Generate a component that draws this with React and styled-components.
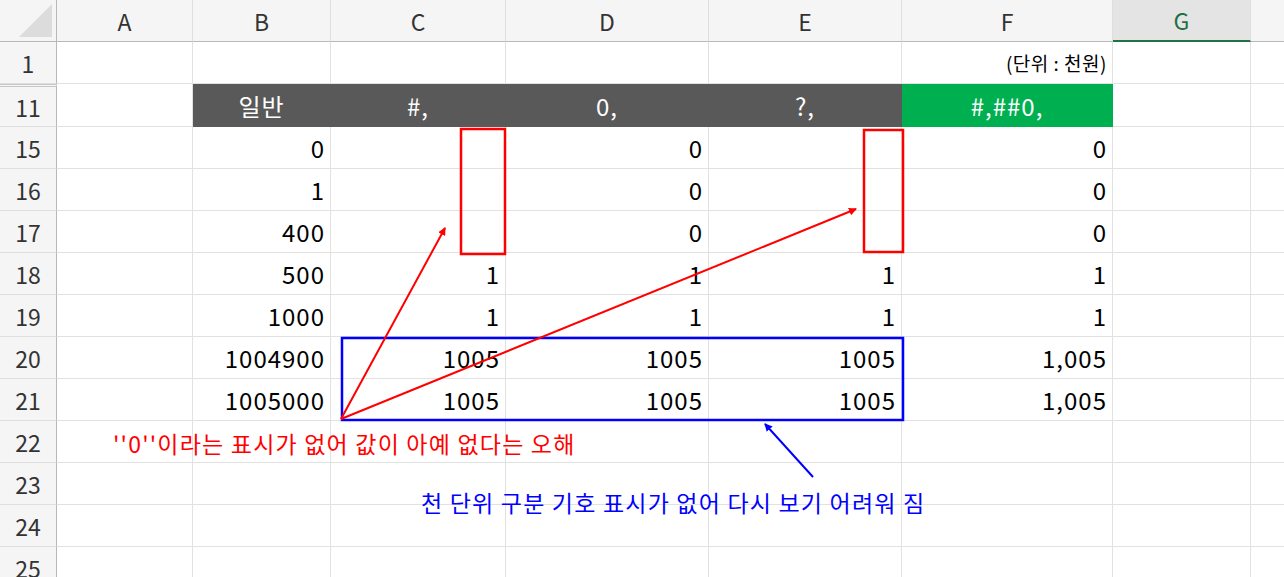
import React from 'react';
import styled, { createGlobalStyle } from 'styled-components';

const Global = createGlobalStyle`
  body { margin: 0; background: #fff; font-family: "Noto Sans CJK KR", "Noto Sans", sans-serif; overflow: hidden; }
`;

const cols = [
  { name: 'A', w: 136 }, { name: 'B', w: 138 }, { name: 'C', w: 175 }, { name: 'D', w: 203 },
  { name: 'E', w: 193 }, { name: 'F', w: 211 }, { name: 'G', w: 138 }, { name: '', w: 40 },
];
const template = `57px ${cols.map(c => c.w + 'px').join(' ')}`;

const rows = [
  { n: 1, cells: { F: '(단위 : 천원)' }, small: true },
  { n: 11, head: true },
  { n: 15, cells: { B: '0', D: '0', F: '0' } },
  { n: 16, cells: { B: '1', D: '0', F: '0' } },
  { n: 17, cells: { B: '400', D: '0', F: '0' } },
  { n: 18, cells: { B: '500', C: '1', D: '1', E: '1', F: '1' } },
  { n: 19, cells: { B: '1000', C: '1', D: '1', E: '1', F: '1' } },
  { n: 20, cells: { B: '1004900', C: '1005', D: '1005', E: '1005', F: '1,005' } },
  { n: 21, cells: { B: '1005000', C: '1005', D: '1005', E: '1005', F: '1,005' } },
  { n: 22 }, { n: 23 }, { n: 24 }, { n: 25 },
];

const headCells = { B: '일반', C: '#,', D: '0,', E: '?,', F: '#,##0,' };

const Sheet = styled.div`
  position: relative;
  width: 1284px;
  height: 577px;
  overflow: hidden;
`;

const Row = styled.div`
  display: grid;
  grid-template-columns: ${template};
  height: ${p => p.$h}px;
`;

const Corner = styled.div`
  background: #f5f5f5;
  border-right: 1px solid #b8b8b8;
  border-bottom: 1px solid #b8b8b8;
  position: relative;
  &::after {
    content: '';
    position: absolute;
    right: 4px; bottom: 4px;
    border-left: 33px solid transparent;
    border-bottom: 33px solid #dcdcdc;
  }
`;

const ColHead = styled.div`
  background: ${p => (p.$sel ? '#e4e4e4' : '#f5f5f5')};
  color: ${p => (p.$sel ? '#1e7145' : '#333')};
  border-right: 1px solid #dedede;
  border-bottom: ${p => (p.$sel ? '2px solid #217346' : '1px solid #b8b8b8')};
  display: flex; align-items: center; justify-content: center;
  font-size: 23px;
`;

const RowHead = styled.div`
  background: #f5f5f5;
  color: #333;
  border-right: 1px solid #b8b8b8;
  border-bottom: 1px solid #dedede;
  border-top: ${p => (p.$double ? '3px double #c8c8c8' : 'none')};
  display: flex; align-items: center; justify-content: center;
  font-size: 23px;
`;

const Cell = styled.div`
  border-right: 1px solid #e1e1e1;
  border-bottom: 1px solid #e1e1e1;
  display: flex; align-items: center;
  justify-content: ${p => p.$align};
  padding: 0 ${p => (p.$center ? 0 : 5)}px;
  font-size: ${p => (p.$small ? 19 : 24)}px;
  letter-spacing: ${p => (p.$small ? 0.5 : 1)}px;
  color: ${p => (p.$fill ? '#fff' : '#000')};
  background: ${p => p.$fill || 'transparent'};
  ${p => p.$fill && 'border-right-color: transparent; border-bottom-color: transparent;'}
  white-space: nowrap;
`;

const Overlay = styled.svg`
  position: absolute;
  left: 0; top: 0;
  pointer-events: none;
`;

const Note = styled.div`
  position: absolute;
  left: ${p => p.$x}px;
  top: ${p => p.$y}px;
  color: ${p => p.$c};
  font-size: 23px;
  letter-spacing: 1.2px;
  white-space: nowrap;
`;

export default function App() {
  return (
    <Sheet>
      <Global />
      <Row $h={42}>
        <Corner />
        {cols.map(c => <ColHead key={c.name + c.w} $sel={c.name === 'G'}>{c.name}</ColHead>)}
      </Row>
      {rows.map(r => (
        <Row key={r.n} $h={r.n === 11 ? 43 : 42}>
          <RowHead $double={r.n === 11}>{r.n}</RowHead>
          {cols.map(c => {
            if (r.head && headCells[c.name]) {
              const fill = c.name === 'F' ? '#00b050' : '#595959';
              return <Cell key={c.name} $fill={fill} $align="center" $center>{headCells[c.name]}</Cell>;
            }
            return (
              <Cell key={c.name + c.w} $align="flex-end" $small={r.small}>
                {r.cells && r.cells[c.name]}
              </Cell>
            );
          })}
        </Row>
      ))}
      <Overlay width="1284" height="577">
        <defs>
          <marker id="ar" markerWidth="8" markerHeight="8" refX="7" refY="4" orient="auto" markerUnits="userSpaceOnUse">
            <path d="M0,0 L8,4 L0,8 z" fill="#ff0000" />
          </marker>
          <marker id="ab" markerWidth="8" markerHeight="8" refX="7" refY="4" orient="auto" markerUnits="userSpaceOnUse">
            <path d="M0,0 L8,4 L0,8 z" fill="#0000ff" />
          </marker>
        </defs>
        <rect x="461" y="129" width="44" height="125" fill="none" stroke="#ff0000" strokeWidth="2.5" />
        <rect x="864" y="130" width="39" height="122" fill="none" stroke="#ff0000" strokeWidth="2.5" />
        <rect x="342" y="338" width="561" height="82" fill="none" stroke="#0000ff" strokeWidth="2.5" />
        <line x1="341" y1="419" x2="445" y2="228" stroke="#ff0000" strokeWidth="2" markerEnd="url(#ar)" />
        <line x1="341" y1="419" x2="856" y2="209" stroke="#ff0000" strokeWidth="2" markerEnd="url(#ar)" />
        <line x1="813" y1="477" x2="765" y2="424" stroke="#0000ff" strokeWidth="2" markerEnd="url(#ab)" />
      </Overlay>
      <Note $x={113} $y={426} $c="#ff0000">''0''이라는 표시가 없어 값이 아예 없다는 오해</Note>
      <Note $x={421} $y={485} $c="#0000ff">천 단위 구분 기호 표시가 없어 다시 보기 어려워 짐</Note>
    </Sheet>
  );
}
